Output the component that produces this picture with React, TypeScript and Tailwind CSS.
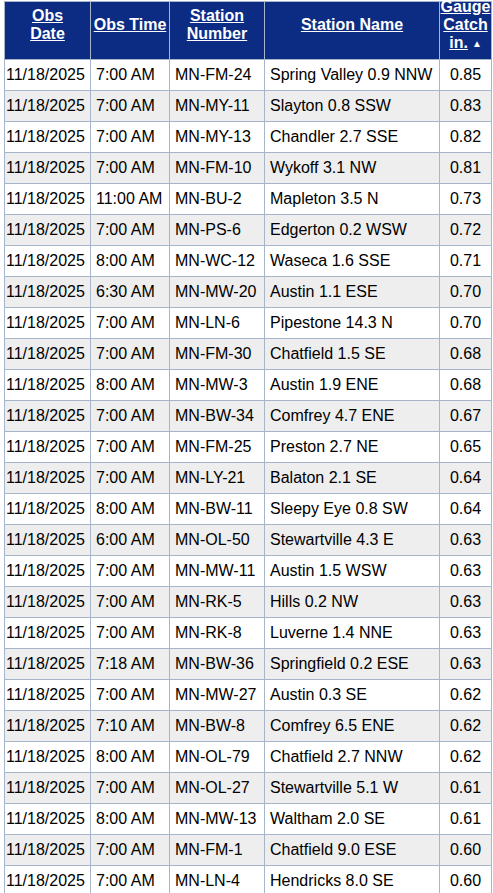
const rows: [string, string, string, string, string][] = [
  ["11/18/2025", "7:00 AM", "MN-FM-24", "Spring Valley 0.9 NNW", "0.85"],
  ["11/18/2025", "7:00 AM", "MN-MY-11", "Slayton 0.8 SSW", "0.83"],
  ["11/18/2025", "7:00 AM", "MN-MY-13", "Chandler 2.7 SSE", "0.82"],
  ["11/18/2025", "7:00 AM", "MN-FM-10", "Wykoff 3.1 NW", "0.81"],
  ["11/18/2025", "11:00 AM", "MN-BU-2", "Mapleton 3.5 N", "0.73"],
  ["11/18/2025", "7:00 AM", "MN-PS-6", "Edgerton 0.2 WSW", "0.72"],
  ["11/18/2025", "8:00 AM", "MN-WC-12", "Waseca 1.6 SSE", "0.71"],
  ["11/18/2025", "6:30 AM", "MN-MW-20", "Austin 1.1 ESE", "0.70"],
  ["11/18/2025", "7:00 AM", "MN-LN-6", "Pipestone 14.3 N", "0.70"],
  ["11/18/2025", "7:00 AM", "MN-FM-30", "Chatfield 1.5 SE", "0.68"],
  ["11/18/2025", "8:00 AM", "MN-MW-3", "Austin 1.9 ENE", "0.68"],
  ["11/18/2025", "7:00 AM", "MN-BW-34", "Comfrey 4.7 ENE", "0.67"],
  ["11/18/2025", "7:00 AM", "MN-FM-25", "Preston 2.7 NE", "0.65"],
  ["11/18/2025", "7:00 AM", "MN-LY-21", "Balaton 2.1 SE", "0.64"],
  ["11/18/2025", "8:00 AM", "MN-BW-11", "Sleepy Eye 0.8 SW", "0.64"],
  ["11/18/2025", "6:00 AM", "MN-OL-50", "Stewartville 4.3 E", "0.63"],
  ["11/18/2025", "7:00 AM", "MN-MW-11", "Austin 1.5 WSW", "0.63"],
  ["11/18/2025", "7:00 AM", "MN-RK-5", "Hills 0.2 NW", "0.63"],
  ["11/18/2025", "7:00 AM", "MN-RK-8", "Luverne 1.4 NNE", "0.63"],
  ["11/18/2025", "7:18 AM", "MN-BW-36", "Springfield 0.2 ESE", "0.63"],
  ["11/18/2025", "7:00 AM", "MN-MW-27", "Austin 0.3 SE", "0.62"],
  ["11/18/2025", "7:10 AM", "MN-BW-8", "Comfrey 6.5 ENE", "0.62"],
  ["11/18/2025", "8:00 AM", "MN-OL-79", "Chatfield 2.7 NNW", "0.62"],
  ["11/18/2025", "7:00 AM", "MN-OL-27", "Stewartville 5.1 W", "0.61"],
  ["11/18/2025", "8:00 AM", "MN-MW-13", "Waltham 2.0 SE", "0.61"],
  ["11/18/2025", "7:00 AM", "MN-FM-1", "Chatfield 9.0 ESE", "0.60"],
  ["11/18/2025", "7:00 AM", "MN-LN-4", "Hendricks 8.0 SE", "0.60"],
];

function Head({ children }: { children: React.ReactNode }) {
  return (
    <th className="h-[58px] border-r border-b border-[#a7b5ca] p-0 align-top font-bold">
      <div className="flex h-[46px] flex-col items-center justify-center whitespace-nowrap leading-[18px]">
        {children}
      </div>
    </th>
  );
}

export default function App() {
  return (
    <div className="min-h-screen bg-white pl-1 pt-px font-['Liberation_Sans',Arial,sans-serif] text-base text-black">
      <table className="w-[488px] table-fixed border-separate border-spacing-0 border-t border-l border-[#a7b5ca]">
        <colgroup>
          <col className="w-[86px]" />
          <col className="w-[79px]" />
          <col className="w-[95px]" />
          <col className="w-[175px]" />
          <col className="w-[52px]" />
        </colgroup>
        <thead className="bg-[#0c2c84] text-white">
          <tr>
            <Head>
              <span className="underline">Obs</span>
              <span className="underline">Date</span>
            </Head>
            <Head>
              <span className="underline">Obs Time</span>
            </Head>
            <Head>
              <span className="underline">Station</span>
              <span className="underline">Number</span>
            </Head>
            <Head>
              <span className="underline">Station Name</span>
            </Head>
            <Head>
              <span className="underline">Gauge</span>
              <span className="underline">Catch</span>
              <span>
                <span className="underline">in.</span>
                <span className="ml-1 align-[1px] text-[10px]">▲</span>
              </span>
            </Head>
          </tr>
        </thead>
        <tbody>
          {rows.map((r, i) => (
            <tr key={i} className={i % 2 === 1 ? "bg-[#eeeeee]" : "bg-white"}>
              <td className="h-[31px] whitespace-nowrap border-r border-b border-[#a7b5ca] pl-px">{r[0]}</td>
              <td className="h-[31px] whitespace-nowrap border-r border-b border-[#a7b5ca] pl-[5px]">{r[1]}</td>
              <td className="h-[31px] whitespace-nowrap border-r border-b border-[#a7b5ca] pl-[5px]">{r[2]}</td>
              <td className="h-[31px] whitespace-nowrap border-r border-b border-[#a7b5ca] pl-[5px]">{r[3]}</td>
              <td className="h-[31px] whitespace-nowrap border-r border-b border-[#a7b5ca] text-center">{r[4]}</td>
            </tr>
          ))}
        </tbody>
      </table>
    </div>
  );
}
